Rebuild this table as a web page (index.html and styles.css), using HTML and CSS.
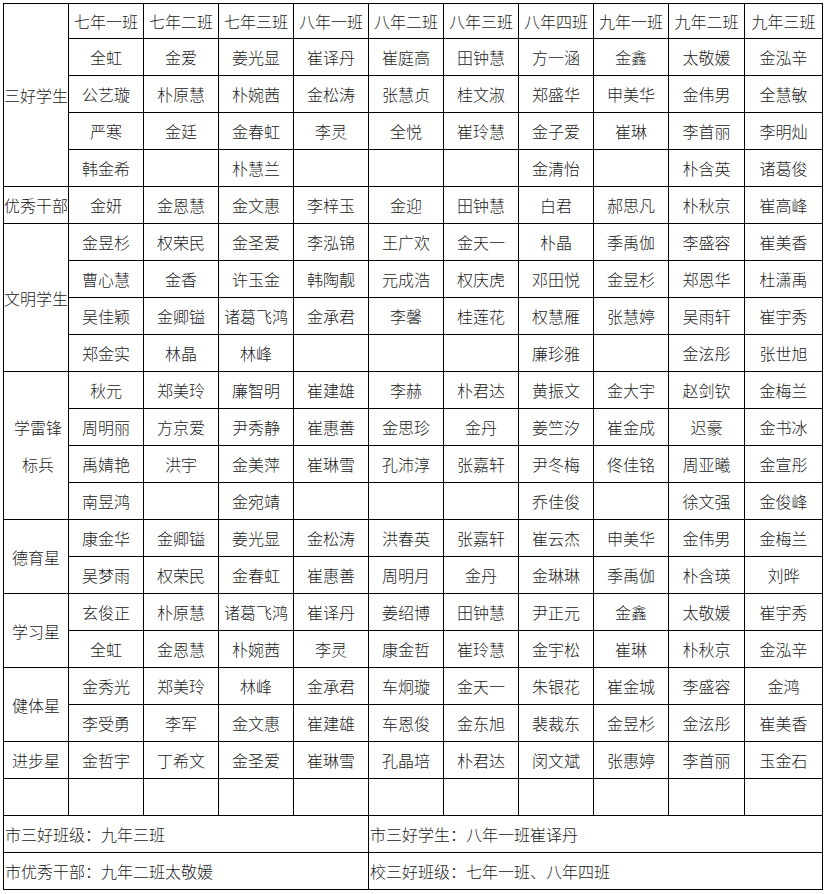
FILE: index.html
```html
<!DOCTYPE html>
<html lang="zh-CN">
<head>
<meta charset="utf-8">
<title>表彰名单</title>
<link rel="stylesheet" href="styles.css">
</head>
<body>
<table class="honor">
  <colgroup>
    <col class="c-label">
    <col class="c-class"><col class="c-class"><col class="c-class"><col class="c-class"><col class="c-class">
    <col class="c-class"><col class="c-class"><col class="c-class"><col class="c-class9"><col class="c-class10">
  </colgroup>
  <tbody>
    <tr class="head">
      <td class="label" rowspan="5">三好学生</td>
      <td>七年一班</td><td>七年二班</td><td>七年三班</td><td>八年一班</td><td>八年二班</td><td>八年三班</td><td>八年四班</td><td>九年一班</td><td>九年二班</td><td>九年三班</td>
    </tr>
    <tr><td>全虹</td><td>金爱</td><td>姜光显</td><td>崔译丹</td><td>崔庭高</td><td>田钟慧</td><td>方一涵</td><td>金鑫</td><td>太敬媛</td><td>金泓辛</td></tr>
    <tr><td>公艺璇</td><td>朴原慧</td><td>朴婉茜</td><td>金松涛</td><td>张慧贞</td><td>桂文淑</td><td>郑盛华</td><td>申美华</td><td>金伟男</td><td>全慧敏</td></tr>
    <tr><td>严寒</td><td>金廷</td><td>金春虹</td><td>李灵</td><td>全悦</td><td>崔玲慧</td><td>金子爱</td><td>崔琳</td><td>李首丽</td><td>李明灿</td></tr>
    <tr><td>韩金希</td><td></td><td>朴慧兰</td><td></td><td></td><td></td><td>金清怡</td><td></td><td>朴含英</td><td>诸葛俊</td></tr>

    <tr><td class="label">优秀干部</td><td>金妍</td><td>金恩慧</td><td>金文惠</td><td>李梓玉</td><td>金迎</td><td>田钟慧</td><td>白君</td><td>郝思凡</td><td>朴秋京</td><td>崔高峰</td></tr>

    <tr><td class="label" rowspan="4">文明学生</td><td>金昱杉</td><td>权荣民</td><td>金圣爱</td><td>李泓锦</td><td>王广欢</td><td>金天一</td><td>朴晶</td><td>季禹伽</td><td>李盛容</td><td>崔美香</td></tr>
    <tr><td>曹心慧</td><td>金香</td><td>许玉金</td><td>韩陶靓</td><td>元成浩</td><td>权庆虎</td><td>邓田悦</td><td>金昱杉</td><td>郑恩华</td><td>杜潇禹</td></tr>
    <tr><td>吴佳颖</td><td>金卿镒</td><td>诸葛飞鸿</td><td>金承君</td><td>李馨</td><td>桂莲花</td><td>权慧雁</td><td>张慧婷</td><td>吴雨轩</td><td>崔宇秀</td></tr>
    <tr><td>郑金实</td><td>林晶</td><td>林峰</td><td></td><td></td><td></td><td>廉珍雅</td><td></td><td>金泫彤</td><td>张世旭</td></tr>

    <tr><td class="label tall" rowspan="4">学雷锋<br>标兵</td><td>秋元</td><td>郑美玲</td><td>廉智明</td><td>崔建雄</td><td>李赫</td><td>朴君达</td><td>黄振文</td><td>金大宇</td><td>赵剑钦</td><td>金梅兰</td></tr>
    <tr><td>周明丽</td><td>方京爱</td><td>尹秀静</td><td>崔惠善</td><td>金思珍</td><td>金丹</td><td>姜竺汐</td><td>崔金成</td><td>迟豪</td><td>金书冰</td></tr>
    <tr><td>禹婧艳</td><td>洪宇</td><td>金美萍</td><td>崔琳雪</td><td>孔沛淳</td><td>张嘉轩</td><td>尹冬梅</td><td>佟佳铭</td><td>周亚曦</td><td>金宣彤</td></tr>
    <tr><td>南昱鸿</td><td></td><td>金宛靖</td><td></td><td></td><td></td><td>乔佳俊</td><td></td><td>徐文强</td><td>金俊峰</td></tr>

    <tr><td class="label" rowspan="2">德育星</td><td>康金华</td><td>金卿镒</td><td>姜光显</td><td>金松涛</td><td>洪春英</td><td>张嘉轩</td><td>崔云杰</td><td>申美华</td><td>金伟男</td><td>金梅兰</td></tr>
    <tr><td>吴梦雨</td><td>权荣民</td><td>金春虹</td><td>崔惠善</td><td>周明月</td><td>金丹</td><td>金琳琳</td><td>季禹伽</td><td>朴含瑛</td><td>刘晔</td></tr>

    <tr><td class="label" rowspan="2">学习星</td><td>玄俊正</td><td>朴原慧</td><td>诸葛飞鸿</td><td>崔译丹</td><td>姜绍博</td><td>田钟慧</td><td>尹正元</td><td>金鑫</td><td>太敬媛</td><td>崔宇秀</td></tr>
    <tr><td>全虹</td><td>金恩慧</td><td>朴婉茜</td><td>李灵</td><td>康金哲</td><td>崔玲慧</td><td>金宇松</td><td>崔琳</td><td>朴秋京</td><td>金泓辛</td></tr>

    <tr><td class="label" rowspan="2">健体星</td><td>金秀光</td><td>郑美玲</td><td>林峰</td><td>金承君</td><td>车炯璇</td><td>金天一</td><td>朱银花</td><td>崔金城</td><td>李盛容</td><td>金鸿</td></tr>
    <tr><td>李受勇</td><td>李军</td><td>金文惠</td><td>崔建雄</td><td>车恩俊</td><td>金东旭</td><td>裴裁东</td><td>金昱杉</td><td>金泫彤</td><td>崔美香</td></tr>

    <tr><td class="label">进步星</td><td>金哲宇</td><td>丁希文</td><td>金圣爱</td><td>崔琳雪</td><td>孔晶培</td><td>朴君达</td><td>闵文斌</td><td>张惠婷</td><td>李首丽</td><td>玉金石</td></tr>

    <tr><td></td><td></td><td></td><td></td><td></td><td></td><td></td><td></td><td></td><td></td><td></td></tr>

    <tr class="foot"><td colspan="5">市三好班级：九年三班</td><td colspan="6">市三好学生：八年一班崔译丹</td></tr>
    <tr class="foot"><td colspan="5">市优秀干部：九年二班太敬媛</td><td colspan="6">校三好班级：七年一班、八年四班</td></tr>
  </tbody>
</table>
</body>
</html>
```

FILE: styles.css
```css
html, body {
  margin: 0;
  padding: 0;
  background: #fff;
}

body {
  padding: 3px 0 0 3px;
  font-family: "Noto Sans CJK SC", "Noto Sans CJK TC", sans-serif;
  font-size: 16px;
  font-weight: 300;
  color: #222;
}

.honor {
  border-collapse: collapse;
  table-layout: fixed;
  width: 820px;
}

.c-label { width: 65px; }
.c-class { width: 75px; }
.c-class9 { width: 76px; }
.c-class10 { width: 78px; }

.honor td {
  border: 1px solid #000;
  height: 36px;
  padding: 0;
  text-align: center;
  vertical-align: middle;
  line-height: 20px;
  white-space: nowrap;
  overflow: hidden;
}

.honor tr.head td {
  height: 34px;
}

.honor td.label {
  padding: 0;
}

.honor td.tall {
  line-height: 37px;
  padding-left: 4px;
}

.honor tr.foot td {
  text-align: left;
  padding-left: 1px;
}
```
